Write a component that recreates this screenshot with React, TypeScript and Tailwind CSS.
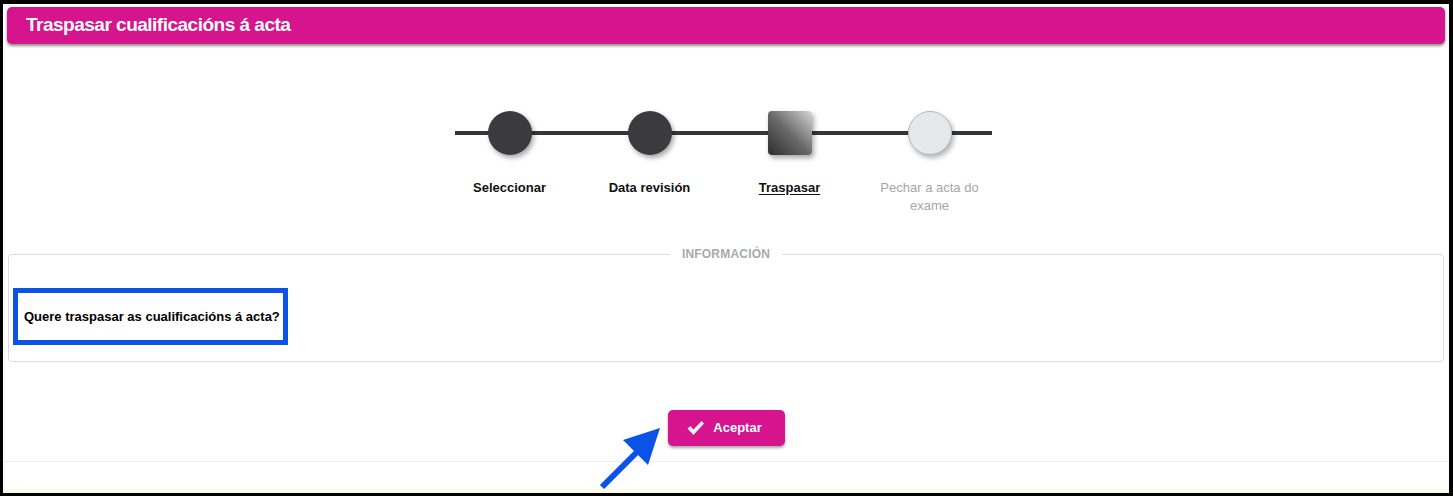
import React from "react";

const steps = [
  { label: "Seleccionar", state: "done" },
  { label: "Data revisión", state: "done" },
  { label: "Traspasar", state: "current" },
  { label: "Pechar a acta do exame", state: "todo" },
];

const StepMarker: React.FC<{ state: string }> = ({ state }) => {
  if (state === "current") {
    return (
      <div className="w-[44px] h-[44px] rounded-[4px] bg-gradient-to-tr from-[#2e2e2e] via-[#6a6a6a] to-[#d8d8d8] shadow-[2px_3px_5px_rgba(0,0,0,0.35)]" />
    );
  }
  if (state === "todo") {
    return (
      <div className="w-[44px] h-[44px] rounded-full bg-[#e6e8ec] border border-[#b8b8b8] shadow-[2px_3px_5px_rgba(0,0,0,0.3)]" />
    );
  }
  return (
    <div className="w-[44px] h-[44px] rounded-full bg-[#3b3b3d] shadow-[2px_3px_5px_rgba(0,0,0,0.35)]" />
  );
};

export default function App() {
  return (
    <div className="w-[1453px] h-[496px] bg-black pt-[4px] pl-[3px] pr-[4px] pb-[3px] font-['Liberation_Sans',Arial,sans-serif]">
      <div className="relative w-full h-full bg-white flex flex-col overflow-hidden">
        {/* header */}
        <div className="mx-[4px] mt-[3px] h-[37px] rounded-[5px] bg-[#d5148d] shadow-[0_2px_3px_rgba(0,0,0,0.45)] flex items-center px-[19px]">
          <h1 className="text-white font-bold text-[19px] tracking-[-0.5px]">
            Traspasar cualificacións á acta
          </h1>
        </div>

        {/* stepper */}
        <div className="flex justify-center mt-[67px] ml-[-13px]">
          <div className="relative flex">
            <div className="absolute left-[15px] right-[8px] top-[20px] h-[4px] bg-[#363636]" />
            {steps.map((s) => (
              <div key={s.label} className="relative w-[140px] flex flex-col items-center">
                <StepMarker state={s.state} />
                <div
                  className={
                    "mt-[24px] text-[13px] font-bold text-center leading-[18px] w-[124px] " +
                    (s.state === "todo"
                      ? "text-[#a6a6a6] font-normal"
                      : s.state === "current"
                      ? "text-[#111] underline underline-offset-2"
                      : "text-[#111]")
                  }
                >
                  {s.label}
                </div>
              </div>
            ))}
          </div>
        </div>

        {/* info fieldset */}
        <fieldset className="mx-[5px] mt-[30px] border border-[#dcdcdc] rounded-[4px] pl-[4px] pr-[4px] pb-[16px] pt-[25px]">
          <legend className="mx-auto px-[12px] text-[12px] font-bold text-[#a9a9a9] tracking-[0.2px]">
            INFORMACIÓN
          </legend>
          <div className="w-[275px] h-[57px] border-[5px] border-[#0b52e6] flex items-center pl-[6px]">
            <span className="text-[13px] font-bold text-black">
              Quere traspasar as cualificacións á acta?
            </span>
          </div>
        </fieldset>

        {/* actions */}
        <div className="flex justify-center mt-[48px]">
          <button className="w-[117px] h-[36px] rounded-[5px] bg-[#d5148d] shadow-[0_2px_3px_rgba(0,0,0,0.35)] flex items-center justify-center gap-[8px] pr-[4px] text-white text-[13px] font-bold">
            <svg width="19" height="16" viewBox="0 0 19 16">
              <path
                d="M1.5 8.5 L4.5 6 L7.5 9.5 L15.5 1 L18 3.5 L7.5 15 Z"
                fill="#f2f2f2"
              />
            </svg>
            Aceptar
          </button>
        </div>

        <div className="mt-[15px] h-px bg-[#ececec] mx-[1px]" />
        <div className="flex-1" />
        <div className="h-[4px] bg-[#fffbe3]" />

        {/* arrow */}
        <svg
          className="absolute left-0 top-0 pointer-events-none"
          width="1446"
          height="489"
          viewBox="0 0 1446 489"
        >
          <line x1="599" y1="483" x2="638" y2="444" stroke="#0b52e6" strokeWidth="6" />
          <polygon points="657,424 620,436 645,461" fill="#0b52e6" />
        </svg>
      </div>
    </div>
  );
}
